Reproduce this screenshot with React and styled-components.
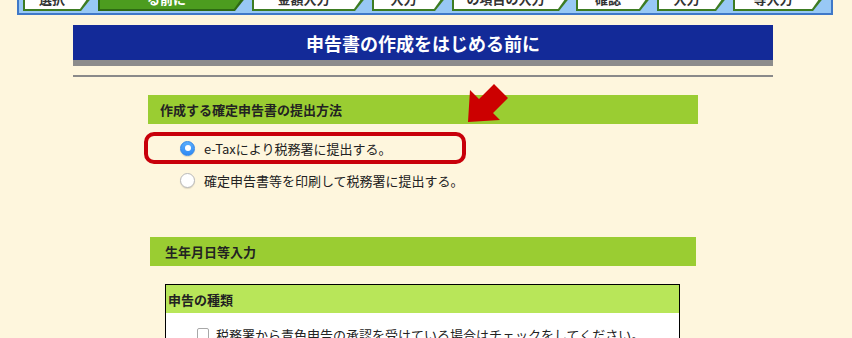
import React from 'react'
import styled, { createGlobalStyle } from 'styled-components'

const GlobalStyle = createGlobalStyle`
    html, body {
        margin: 0;
        padding: 0;
        background: #fef6dd;
    }
    body {
        font-family: "Noto Sans CJK JP", "Noto Sans", sans-serif;
        color: #222;
    }
`

const Page = styled.div`
    position: relative;
    width: 852px;
    height: 338px;
    overflow: hidden;
`

const TabStrip = styled.div`
    display: flex;
    gap: 7px;
    width: 816px;
    box-sizing: border-box;
    margin: -14px 0 0 17px;
    padding: 0 0 2px 4px;
    background: #98c8f5;
    border: 2px solid #3f78c8;
    border-top: none;
`

const Tab = styled.div`
    flex: none;
    display: flex;
    width: ${p => p.$w}px;
    height: 25px;
    box-sizing: border-box;
    padding: 0 2px 2px 2px;
    background: ${p => (p.$active ? '#2e6a14' : '#3d7c22')};
    clip-path: polygon(0 0, 100% 0, 100% 50%, calc(100% - 10px) 100%, 0 100%);
`

const TabFace = styled.div`
    flex: 1;
    display: flex;
    justify-content: center;
    padding: 6px 10px 0 0;
    background: ${p => (p.$active ? '#4c9c1f' : '#fff')};
    color: ${p => (p.$active ? '#fff' : '#333')};
    font-size: 13px;
    font-weight: bold;
    line-height: 13px;
    white-space: nowrap;
    clip-path: polygon(0 0, 100% 0, 100% 45%, calc(100% - 9px) 100%, 0 100%);
`

const Header = styled.h1`
    display: flex;
    align-items: center;
    justify-content: center;
    width: 700px;
    height: 35px;
    margin: 10px 0 0 73px;
    background: #132a98;
    border-bottom: 6px solid #8c8c8c;
    color: #fff;
    font-size: 18px;
    font-weight: bold;
`

const Rule = styled.div`
    width: 700px;
    height: 2px;
    margin: 9px 0 0 73px;
    background: #8a8a8a;
`

const Section = styled.section`
    width: ${p => p.$w}px;
    margin: ${p => p.$top}px 0 0 ${p => p.$left}px;
`

const SectionTitle = styled.div`
    display: flex;
    align-items: center;
    height: 29px;
    padding-left: ${p => p.$pad}px;
    background: #9acd32;
    font-size: 13px;
    font-weight: bold;
    color: #222;
`

const Options = styled.div`
    margin: 8px 0 0 -4px;
`

const Option = styled.label`
    display: flex;
    align-items: center;
    gap: 9px;
    width: 322px;
    height: 32px;
    box-sizing: border-box;
    padding-left: 32px;
    border: 4px solid ${p => (p.$hl ? '#c8000a' : 'transparent')};
    border-radius: 10px;
    font-size: 13px;
    color: #222;
    white-space: nowrap;
`

const Radio = styled.span`
    flex: none;
    display: flex;
    align-items: center;
    justify-content: center;
    width: 15px;
    height: 15px;
    box-sizing: border-box;
    border-radius: 50%;
    background: ${p => (p.$checked ? 'linear-gradient(#5aaefc, #2f8af5)' : '#fff')};
    border: 1px solid ${p => (p.$checked ? '#2f85e8' : '#b9b9b9')};
    box-shadow: 0 1px 1px rgba(0, 0, 0, 0.12);

    &::after {
        content: '';
        display: ${p => (p.$checked ? 'block' : 'none')};
        width: 6px;
        height: 6px;
        border-radius: 50%;
        background: #fff;
    }
`

const InnerBox = styled.div`
    margin: 18px 16px 0 15px;
    border: 1px solid #000;
    background: #fff;
    height: 80px;
`

const InnerHead = styled.div`
    display: flex;
    align-items: center;
    height: 28px;
    padding-left: 2px;
    background: #b8e659;
    font-size: 13px;
    font-weight: bold;
    color: #222;
`

const CheckRow = styled.label`
    display: flex;
    align-items: center;
    gap: 7px;
    height: 18px;
    padding: 12px 0 0 31px;
    font-size: 13px;
    color: #222;
    white-space: nowrap;
`

const Check = styled.span`
    flex: none;
    width: 12px;
    height: 12px;
    box-sizing: border-box;
    border: 1px solid #a8a8a8;
    border-radius: 2px;
    background: #fff;
`

const Arrow = styled.svg`
    position: absolute;
    left: 462px;
    top: 78px;
`

const tabs = [
    { label: '選択', w: 68 },
    { label: 'る前に', w: 147, active: true },
    { label: '金額入力', w: 113 },
    { label: '入力', w: 73 },
    { label: 'の項目の入力', w: 117 },
    { label: '確認', w: 74 },
    { label: '入力', w: 69 },
    { label: '等入力', w: 90 },
]

const App = () => {
    return (
        <Page>
            <GlobalStyle />
            <TabStrip>
                {tabs.map((t, i) => (
                    <Tab key={i} $w={t.w} $active={t.active}>
                        <TabFace $active={t.active}>{t.label}</TabFace>
                    </Tab>
                ))}
            </TabStrip>

            <Header>申告書の作成をはじめる前に</Header>
            <Rule />

            <Section $w={550} $left={148} $top={18}>
                <SectionTitle $pad={12}>作成する確定申告書の提出方法</SectionTitle>
                <Options>
                    <Option $hl>
                        <Radio $checked />
                        e-Taxにより税務署に提出する。
                    </Option>
                    <Option>
                        <Radio />
                        確定申告書等を印刷して税務署に提出する。
                    </Option>
                </Options>
            </Section>

            <Section $w={546} $left={150} $top={41}>
                <SectionTitle $pad={15}>生年月日等入力</SectionTitle>
                <InnerBox>
                    <InnerHead>申告の種類</InnerHead>
                    <CheckRow>
                        <Check />
                        税務署から青色申告の承認を受けている場合はチェックをしてください。
                    </CheckRow>
                </InnerBox>
            </Section>

            <Arrow width="50" height="48" viewBox="0 0 50 48">
                <polygon
                    points="6,44 8,12 17,21 32,6 46,20 31,35 38,42"
                    fill="#cc0000"
                />
            </Arrow>
        </Page>
    )
}

export default App
